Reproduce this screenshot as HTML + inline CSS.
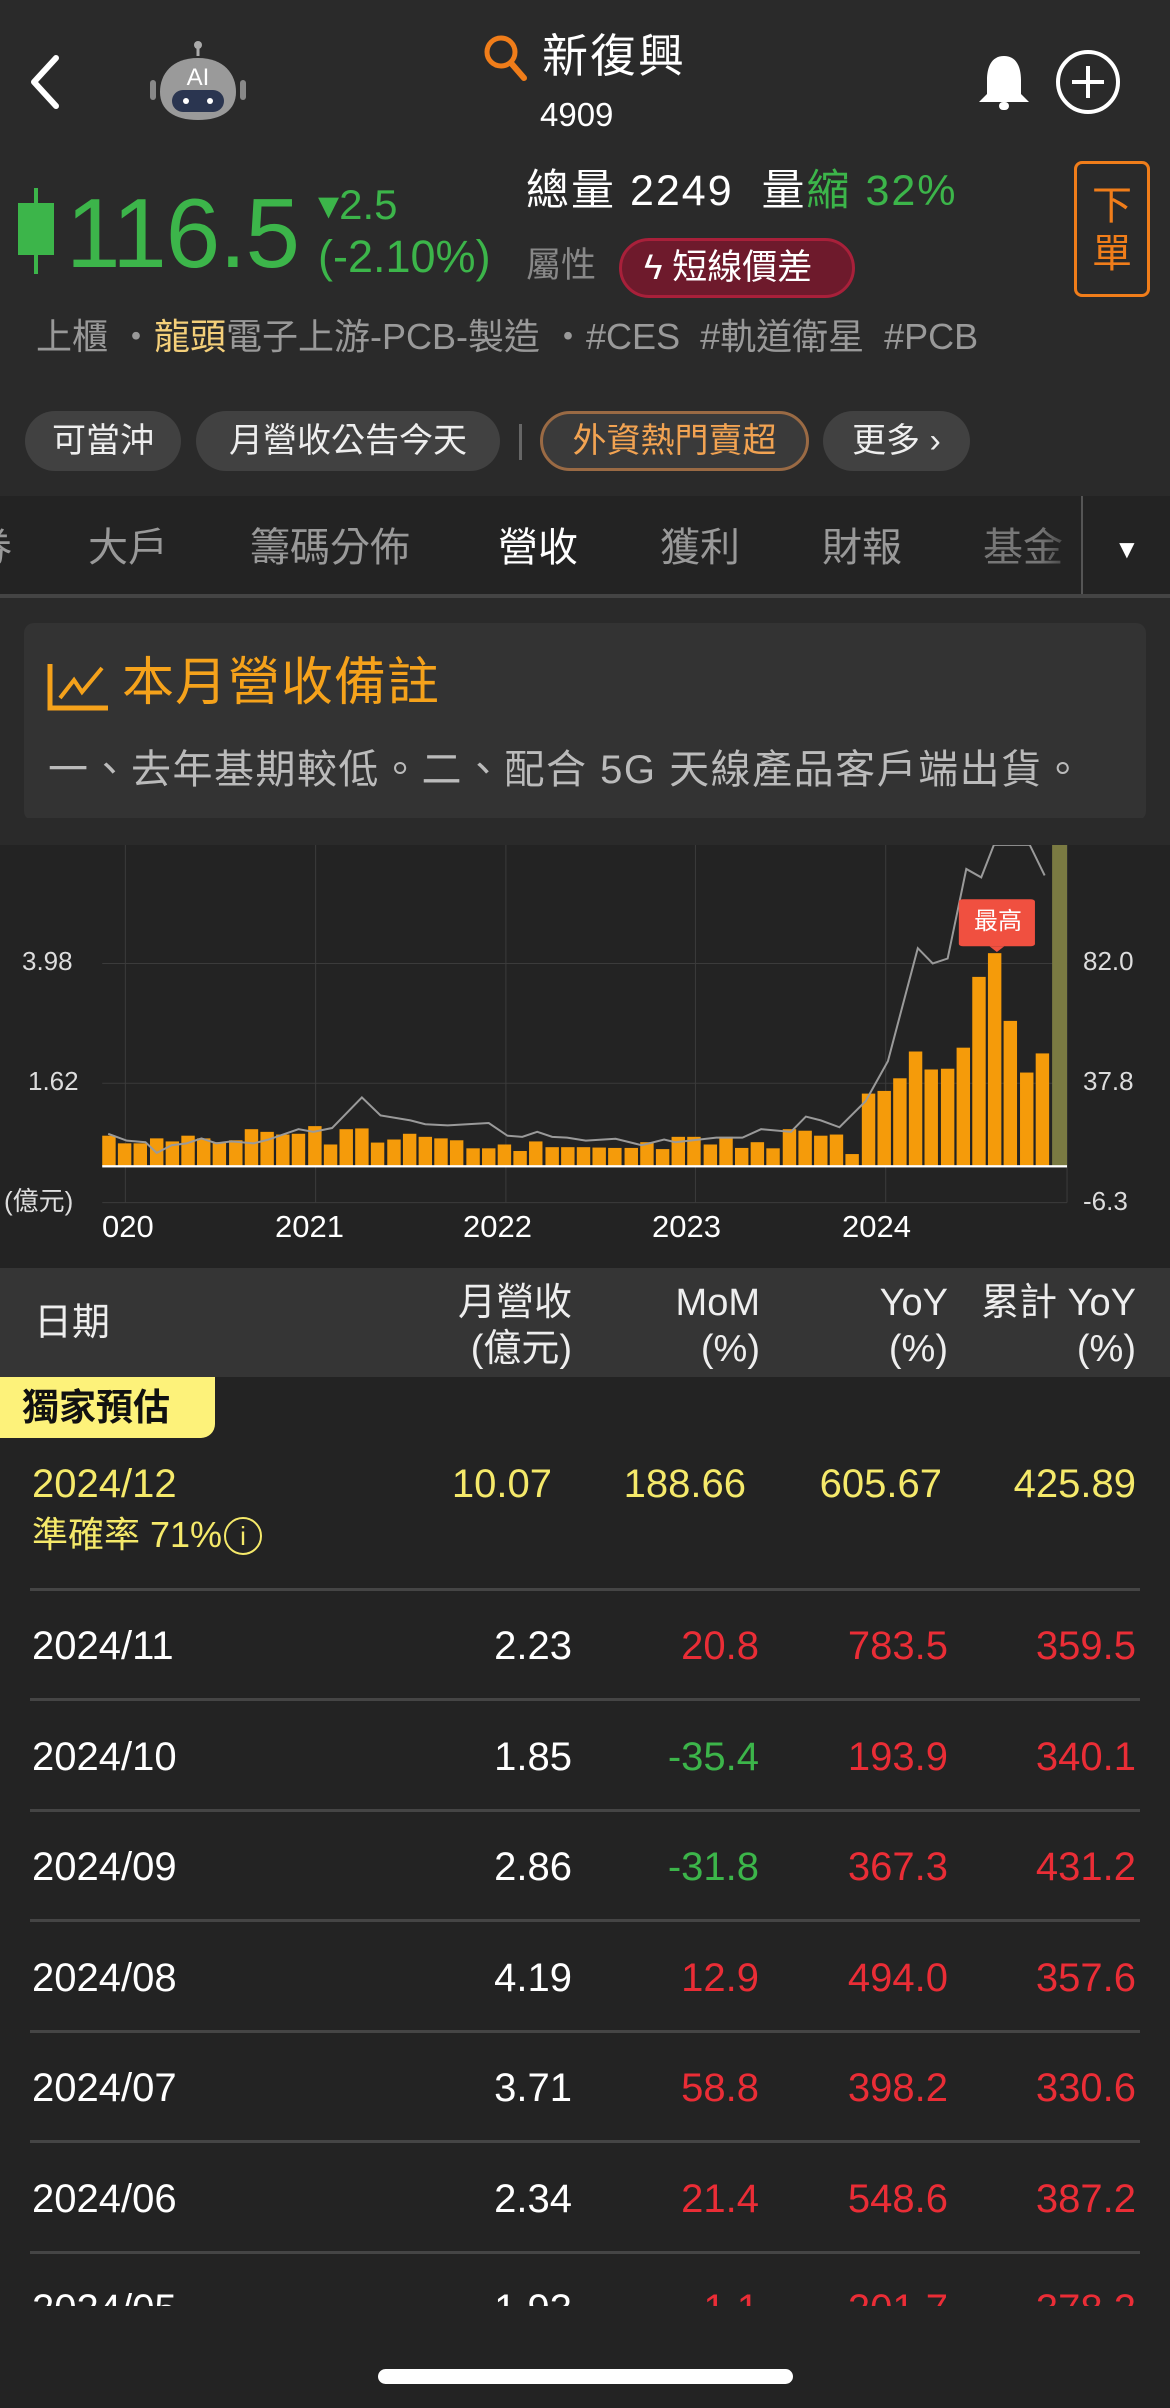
<!DOCTYPE html>
<html><head><meta charset="utf-8">
<style>
*{margin:0;padding:0;box-sizing:border-box}
body{width:1170px;height:2408px;background:#2a2a2a;font-family:"Liberation Sans","Noto Sans CJK TC",sans-serif;color:#fff;position:relative;overflow:hidden}
.a{position:absolute;white-space:nowrap;line-height:1}
.chip{position:absolute;top:411px;height:60px;border-radius:30px;background:#414141;color:#eee;font-size:34px;line-height:60px;text-align:center}
.tab{position:absolute;top:527px;font-size:40px;color:#999;line-height:42px}
.row{position:absolute;left:0;width:1170px;font-size:40px;line-height:40px}
.row span{position:absolute;top:0}
.r{color:#ea2d36}.g{color:#3cb54a}
.sep{position:absolute;left:30px;width:1110px;height:3px;background:#454545}
</style></head><body>
<svg class="a" style="left:26px;top:54px" width="36" height="56" viewBox="0 0 36 56"><path d="M30 4 L8 28 L30 52" stroke="#fff" stroke-width="6" fill="none" stroke-linecap="round" stroke-linejoin="round"/></svg>
<svg class="a" style="left:148px;top:40px" width="100" height="82" viewBox="0 0 100 82">
<line x1="50" y1="2" x2="50" y2="16" stroke="#aaa" stroke-width="3"/><circle cx="50" cy="5" r="4" fill="#aaa"/>
<rect x="2" y="40" width="6" height="20" rx="3" fill="#888"/><rect x="92" y="40" width="6" height="20" rx="3" fill="#888"/>
<path d="M50 18 C24 18 12 34 12 52 C12 70 26 80 50 80 C74 80 88 70 88 52 C88 34 76 18 50 18Z" fill="#9a9a9a"/>
<rect x="24" y="50" width="52" height="22" rx="11" fill="#2a3550"/><circle cx="38" cy="61" r="3" fill="#fff"/><circle cx="62" cy="61" r="3" fill="#fff"/>
<text x="50" y="45" text-anchor="middle" font-family="Liberation Sans" font-size="24" fill="#fff">AI</text></svg>
<svg class="a" style="left:482px;top:33px" width="48" height="50" viewBox="0 0 48 50"><circle cx="19" cy="19" r="14" stroke="#f07d1a" stroke-width="5" fill="none"/><line x1="29" y1="30" x2="42" y2="45" stroke="#f07d1a" stroke-width="6" stroke-linecap="round"/></svg>
<div class="a" style="left:542px;top:33px;font-size:46px;letter-spacing:2px">新復興</div>
<div class="a" style="left:540px;top:98px;font-size:33px">4909</div>
<svg class="a" style="left:975px;top:52px" width="58" height="62" viewBox="0 0 58 62"><path d="M29 4 C16 4 12 16 12 28 L12 42 L4 50 L54 50 L46 42 L46 28 C46 16 42 4 29 4Z" fill="#fff"/><rect x="24" y="50" width="10" height="8" rx="4" fill="#fff"/></svg>
<svg class="a" style="left:1054px;top:48px" width="68" height="68" viewBox="0 0 68 68"><circle cx="34" cy="34" r="30" stroke="#fff" stroke-width="4" fill="none"/><path d="M34 18V50M18 34H50" stroke="#fff" stroke-width="4"/></svg>
<div class="a" style="left:34px;top:188px;width:4px;height:86px;background:#3cb54a"></div>
<div class="a" style="left:18px;top:203px;width:36px;height:52px;background:#3cb54a"></div>
<div class="a" style="left:66px;top:184px;font-size:98px;color:#3cb54a;letter-spacing:-1px">116.5</div>
<div class="a" style="left:318px;top:184px;font-size:42px;color:#3cb54a">▾2.5</div>
<div class="a" style="left:318px;top:234px;font-size:45px;color:#3cb54a">(-2.10%)</div>
<div class="a" style="left:526px;top:170px;font-size:43px;letter-spacing:2px">總量 2249 &nbsp;量<span style="color:#3cb54a">縮 32%</span></div>
<div class="a" style="left:526px;top:248px;font-size:35px;color:#888">屬性</div>
<div class="a" style="left:619px;top:238px;width:236px;height:60px;border:3px solid #a8203a;background:#6e1a2c;border-radius:30px;font-size:35px;line-height:54px;padding-left:22px">ϟ 短線價差</div>
<div class="a" style="left:1074px;top:161px;width:76px;height:136px;border:3px solid #f07d1a;border-radius:8px;color:#f07d1a;font-size:40px;line-height:48px;text-align:center;padding-top:18px;white-space:normal">下<br>單</div>
<div class="a" style="left:36px;top:319px;font-size:36px;color:#999">上櫃 ・<span style="color:#f5d07a">龍頭</span>電子上游-PCB-製造 ・#CES &nbsp;#軌道衛星 &nbsp;#PCB</div>
<div class="chip" style="left:25px;width:156px">可當沖</div>
<div class="chip" style="left:196px;width:304px">月營收公告今天</div>
<div class="a" style="left:519px;top:424px;width:3px;height:36px;background:#666"></div>
<div class="chip" style="left:540px;width:269px;background:#3a3a3a;border:3px solid #9a6a44;color:#f2a352;line-height:54px">外資熱門賣超</div>
<div class="chip" style="left:823px;width:147px">更多 ›</div>
<div class="a" style="left:0;top:496px;width:1170px;height:100px;background:#232323"></div>
<div class="a" style="left:0;top:594px;width:1170px;height:4px;background:#444"></div>
<div class="tab" style="left:-28px">券</div>
<div class="tab" style="left:88px">大戶</div>
<div class="tab" style="left:250px">籌碼分佈</div>
<div class="tab" style="left:498px;color:#fff">營收</div>
<div class="tab" style="left:660px">獲利</div>
<div class="tab" style="left:822px">財報</div>
<div class="tab" style="left:983px;color:#777">基金</div>
<div class="a" style="left:1040px;top:496px;width:42px;height:98px;background:linear-gradient(90deg,rgba(35,35,35,0),#232323)"></div>
<div class="a" style="left:1081px;top:496px;width:2px;height:98px;background:#555"></div>
<div class="a" style="left:1114px;top:536px;font-size:26px">▼</div>
<div class="a" style="left:24px;top:623px;width:1122px;height:198px;background:#333;border-radius:10px"></div>
<svg class="a" style="left:46px;top:662px" width="64" height="50" viewBox="0 0 64 50"><path d="M4 2V46H62" stroke="#f5a21b" stroke-width="5" fill="none"/><path d="M14 36L28 18L36 30L56 6" stroke="#f5a21b" stroke-width="4" fill="none"/></svg>
<div class="a" style="left:122px;top:657px;font-size:52px;color:#f5a21b;letter-spacing:1px">本月營收備註</div>
<div class="a" style="left:48px;top:750px;font-size:40px;color:#bbb;letter-spacing:1.5px">一、去年基期較低。二、配合 5G 天線產品客戶端出貨。</div>
<div class="a" style="left:0;top:845px;width:1170px;height:423px;background:#232323"></div>
<svg class="a" style="left:0;top:820px" width="1170" height="600" viewBox="0 0 1568 1568" preserveAspectRatio="none">
<g stroke="#3b3b3b" stroke-width="1">
<line x1="168" y1="65" x2="168" y2="1000" vector-effect="non-scaling-stroke"/><line x1="423" y1="65" x2="423" y2="1000" vector-effect="non-scaling-stroke"/><line x1="678" y1="65" x2="678" y2="1000" vector-effect="non-scaling-stroke"/><line x1="932" y1="65" x2="932" y2="1000" vector-effect="non-scaling-stroke"/><line x1="1187" y1="65" x2="1187" y2="1000" vector-effect="non-scaling-stroke"/><line x1="1430" y1="65" x2="1430" y2="1000" vector-effect="non-scaling-stroke"/>
<line x1="137" y1="375" x2="1430" y2="375" vector-effect="non-scaling-stroke"/><line x1="137" y1="688" x2="1430" y2="688" vector-effect="non-scaling-stroke"/><line x1="137" y1="1000" x2="1430" y2="1000" vector-effect="non-scaling-stroke"/></g>
<g fill="#f59b0a">
<rect x="137" y="825" width="18" height="80"/><rect x="158" y="845" width="18" height="60"/><rect x="179" y="845" width="18" height="60"/><rect x="201" y="832" width="18" height="73"/><rect x="222" y="840" width="18" height="65"/><rect x="243" y="825" width="18" height="80"/><rect x="264" y="832" width="18" height="73"/><rect x="285" y="842" width="18" height="63"/><rect x="307" y="837" width="18" height="68"/><rect x="328" y="808" width="18" height="97"/><rect x="349" y="815" width="18" height="90"/><rect x="370" y="822" width="18" height="83"/><rect x="391" y="820" width="18" height="85"/><rect x="413" y="800" width="18" height="105"/><rect x="434" y="848" width="18" height="57"/><rect x="455" y="808" width="18" height="97"/><rect x="476" y="806" width="18" height="99"/><rect x="497" y="843" width="18" height="62"/><rect x="519" y="835" width="18" height="70"/><rect x="540" y="820" width="18" height="85"/><rect x="561" y="828" width="18" height="77"/><rect x="582" y="832" width="18" height="73"/><rect x="603" y="837" width="18" height="68"/><rect x="625" y="858" width="18" height="47"/><rect x="646" y="858" width="18" height="47"/><rect x="667" y="848" width="18" height="57"/><rect x="688" y="865" width="18" height="40"/><rect x="709" y="840" width="18" height="65"/><rect x="731" y="855" width="18" height="50"/><rect x="752" y="855" width="18" height="50"/><rect x="773" y="855" width="18" height="50"/><rect x="794" y="856" width="18" height="49"/><rect x="815" y="857" width="18" height="48"/><rect x="837" y="857" width="18" height="48"/><rect x="858" y="842" width="18" height="63"/><rect x="879" y="860" width="18" height="45"/><rect x="900" y="828" width="18" height="77"/><rect x="921" y="828" width="18" height="77"/><rect x="943" y="848" width="18" height="57"/><rect x="964" y="828" width="18" height="77"/><rect x="985" y="857" width="18" height="48"/><rect x="1006" y="842" width="18" height="63"/><rect x="1027" y="858" width="18" height="47"/><rect x="1049" y="808" width="18" height="97"/><rect x="1070" y="812" width="18" height="93"/><rect x="1091" y="825" width="18" height="80"/><rect x="1112" y="822" width="18" height="83"/><rect x="1133" y="873" width="18" height="32"/><rect x="1155" y="715" width="18" height="190"/><rect x="1176" y="708" width="18" height="197"/><rect x="1197" y="675" width="18" height="230"/><rect x="1218" y="605" width="18" height="300"/><rect x="1239" y="652" width="18" height="253"/><rect x="1261" y="650" width="18" height="255"/><rect x="1282" y="595" width="18" height="310"/><rect x="1303" y="410" width="18" height="495"/><rect x="1324" y="348" width="18" height="557"/><rect x="1345" y="525" width="18" height="380"/><rect x="1367" y="660" width="18" height="245"/><rect x="1388" y="610" width="18" height="295"/></g>
<rect x="1410" y="65" width="20" height="840" fill="#7a7a42"/>
<polyline fill="none" stroke="#9a9a9a" stroke-width="2" vector-effect="non-scaling-stroke" points="145,820 170,838 195,842 210,870 230,850 250,845 270,832 290,845 310,840 340,845 360,835 400,808 420,815 445,805 485,725 510,772 550,785 570,795 600,798 655,792 680,825 700,828 720,815 740,828 760,830 785,838 825,833 860,850 890,835 905,842 960,830 995,830 1020,808 1060,815 1080,775 1100,785 1125,803 1160,735 1190,630 1230,335 1250,375 1270,362 1295,128 1315,150 1332,65 1380,65 1400,145"/>
<rect x="137" y="902" width="1293" height="6" fill="#fff"/>
<rect x="1285" y="207" width="102" height="123" rx="6" fill="#f05040"/><path d="M1326 330L1336 345L1346 330Z" fill="#f05040"/>
</svg>
<div class="a" style="left:960px;top:910px;width:76px;text-align:center;font-size:24px">最高</div>
<div class="a" style="left:0;top:818px;width:1170px;height:27px;background:#2a2a2a"></div>
<div class="a" style="left:22px;top:948px;font-size:26px;color:#ddd">3.98</div>
<div class="a" style="left:28px;top:1068px;font-size:26px;color:#ddd">1.62</div>
<div class="a" style="left:4px;top:1188px;font-size:26px;color:#ddd">(億元)</div>
<div class="a" style="left:1083px;top:948px;font-size:26px;color:#ddd">82.0</div>
<div class="a" style="left:1083px;top:1068px;font-size:26px;color:#ddd">37.8</div>
<div class="a" style="left:1083px;top:1188px;font-size:26px;color:#ddd">-6.3</div>
<div class="a" style="left:102px;top:1211px;font-size:31px">020</div>
<div class="a" style="left:275px;top:1211px;font-size:31px">2021</div>
<div class="a" style="left:463px;top:1211px;font-size:31px">2022</div>
<div class="a" style="left:652px;top:1211px;font-size:31px">2023</div>
<div class="a" style="left:842px;top:1211px;font-size:31px">2024</div>
<div class="a" style="left:0;top:1268px;width:1170px;height:1140px;background:#232323"></div>
<div class="a" style="left:0;top:1268px;width:1170px;height:109px;background:#353535"></div>
<div class="a" style="left:34px;top:1304px;font-size:38px;color:#eee">日期</div>
<div class="a" style="left:0;top:1280px;width:572px;text-align:right;font-size:38px;line-height:46px;color:#eee;white-space:normal">月營收<br>(億元)</div>
<div class="a" style="left:0;top:1280px;width:760px;text-align:right;font-size:38px;line-height:46px;color:#eee;white-space:normal">MoM<br>(%)</div>
<div class="a" style="left:0;top:1280px;width:948px;text-align:right;font-size:38px;line-height:46px;color:#eee;white-space:normal">YoY<br>(%)</div>
<div class="a" style="left:0;top:1280px;width:1136px;text-align:right;font-size:38px;line-height:46px;color:#eee;white-space:normal">累計 YoY<br>(%)</div>
<div class="a" style="left:0;top:1377px;width:215px;height:61px;background:#fdf27a;border-radius:0 0 14px 0;color:#111;font-size:37px;font-weight:bold;line-height:61px;padding-left:22px">獨家預估</div>
<div class="row" style="top:1464px;color:#f5e96a"><span style="left:32px">2024/12</span><span style="right:618px">10.07</span><span style="right:424px">188.66</span><span style="right:228px">605.67</span><span style="right:34px">425.89</span></div>
<div class="a" style="left:32px;top:1517px;font-size:36px;color:#f5e96a">準確率 71%<span style="display:inline-block;width:38px;height:38px;border:2px solid #f5e96a;border-radius:50%;font-size:26px;line-height:34px;text-align:center;vertical-align:top;margin-left:2px">i</span></div>
<div class="sep" style="top:1588px"></div>
<div class="row" style="top:1626px"><span style="left:32px">2024/11</span><span style="right:598px">2.23</span><span class="r" style="right:411px">20.8</span><span class="r" style="right:222px">783.5</span><span class="r" style="right:34px">359.5</span></div>
<div class="sep" style="top:1698px"></div>
<div class="row" style="top:1737px"><span style="left:32px">2024/10</span><span style="right:598px">1.85</span><span class="g" style="right:411px">-35.4</span><span class="r" style="right:222px">193.9</span><span class="r" style="right:34px">340.1</span></div>
<div class="sep" style="top:1809px"></div>
<div class="row" style="top:1847px"><span style="left:32px">2024/09</span><span style="right:598px">2.86</span><span class="g" style="right:411px">-31.8</span><span class="r" style="right:222px">367.3</span><span class="r" style="right:34px">431.2</span></div>
<div class="sep" style="top:1919px"></div>
<div class="row" style="top:1958px"><span style="left:32px">2024/08</span><span style="right:598px">4.19</span><span class="r" style="right:411px">12.9</span><span class="r" style="right:222px">494.0</span><span class="r" style="right:34px">357.6</span></div>
<div class="sep" style="top:2030px"></div>
<div class="row" style="top:2068px"><span style="left:32px">2024/07</span><span style="right:598px">3.71</span><span class="r" style="right:411px">58.8</span><span class="r" style="right:222px">398.2</span><span class="r" style="right:34px">330.6</span></div>
<div class="sep" style="top:2140px"></div>
<div class="row" style="top:2179px"><span style="left:32px">2024/06</span><span style="right:598px">2.34</span><span class="r" style="right:411px">21.4</span><span class="r" style="right:222px">548.6</span><span class="r" style="right:34px">387.2</span></div>
<div class="sep" style="top:2251px"></div>
<div class="a" style="left:0;top:2289px;width:1170px;height:17px;overflow:hidden"><div class="row" style="top:0"><span style="left:32px">2024/05</span><span style="right:598px">1.93</span><span class="r" style="right:411px">1.1</span><span class="r" style="right:222px">201.7</span><span class="r" style="right:34px">378.2</span></div></div>
<div class="a" style="left:378px;top:2369px;width:415px;height:15px;border-radius:8px;background:#fff"></div>
</body></html>
